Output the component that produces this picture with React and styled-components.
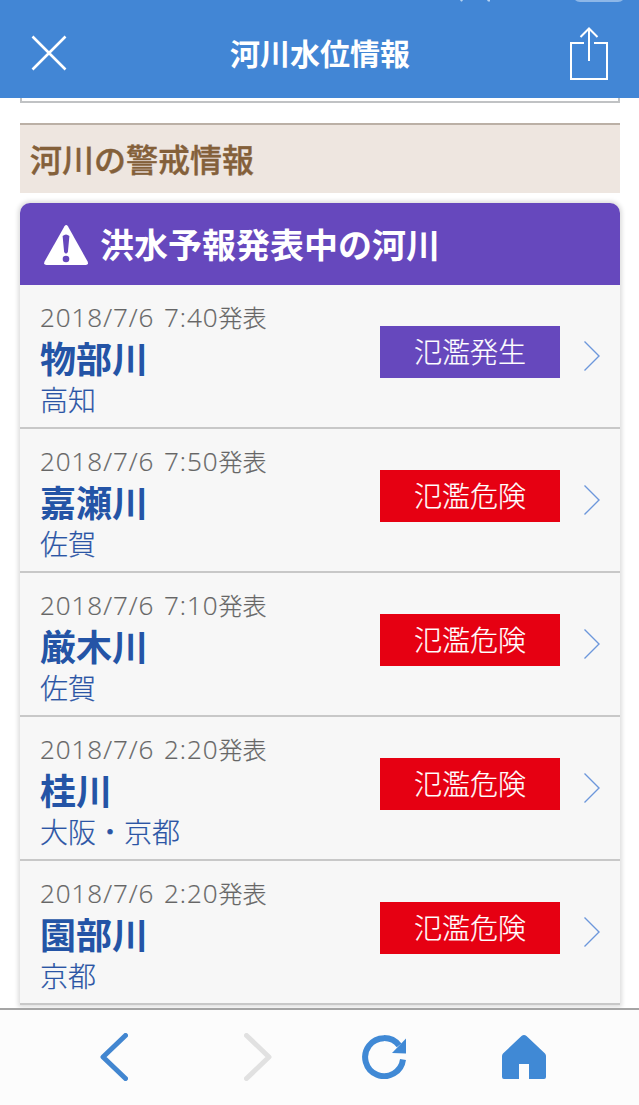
import React from 'react';
import styled, { createGlobalStyle } from 'styled-components';

const GlobalStyle = createGlobalStyle`
  * {
    box-sizing: border-box;
  }
  body {
    margin: 0;
    background: #fff;
    font-family: 'Noto Sans CJK JP', sans-serif;
  }
  h1,
  h2,
  h3,
  h4,
  p {
    margin: 0;
    padding: 0;
  }
  button {
    display: flex;
    padding: 0;
    border: 0;
    background: none;
  }
`;

const AppStyled = styled.div`
  width: 100%;
  height: 1105px;
  display: flex;
  flex-direction: column;
  overflow: hidden;
`;

const TopBar = styled.header`
  position: relative;
  flex: none;
  height: 98px;
  padding: 25px 30px 17px;
  display: flex;
  align-items: center;
  justify-content: space-between;
  background: #4286d5;
  color: #fff;

  h1 {
    padding: 0 0 3px 3px;
    font-size: 30px;
    line-height: 44px;
    font-weight: 700;
  }
  .status {
    position: absolute;
    top: 0;
    right: 0;
  }
`;

const Content = styled.main`
  flex: 1;
  min-height: 0;
  padding: 0 19px 0 20px;
  overflow: hidden;
`;

const PreviousBox = styled.div`
  height: 5px;
  border: 2px solid #c0c2c4;
  border-top: 0;
`;

const SectionTitle = styled.h2`
  height: 70px;
  margin: 20px 0 10px;
  padding-left: 10px;
  border-top: 2px solid #bbb0a6;
  background: #eee6e0;
  color: #84603a;
  font-size: 32px;
  line-height: 66px;
  font-weight: 500;
  -webkit-text-stroke: 0.4px #84603a;
`;

const Card = styled.section`
  border-radius: 10px 10px 0 0;
  background: #f7f7f7;
  box-shadow: 0 0 4px 2px #dedede;
`;

const CardHeader = styled.div`
  height: 82px;
  padding-left: 24px;
  display: flex;
  align-items: center;
  gap: 11px;
  border-radius: 10px 10px 0 0;
  background: #6648bd;
  color: #fff;

  svg {
    margin-top: 2px;
  }
  h3 {
    font-size: 34px;
    line-height: 80px;
    font-weight: 700;
  }
`;

const RiverRow = styled.div`
  height: 144px;
  padding: 0 20px;
  display: flex;
  align-items: center;
  border-bottom: 2px solid #c8c8c8;

  .info {
    flex: 1;
    padding-top: 6px;
  }
  .date {
    color: #666;
    font-size: 24px;
    line-height: 40px;
    font-weight: 300;
    -webkit-text-stroke: 0.2px #666;
  }
  .time {
    font-family: 'Open Sans', 'Noto Sans CJK JP', sans-serif;
    font-size: 26px;
    letter-spacing: 0.95px;
    word-spacing: 2px;
  }
  .name {
    color: #2454a6;
    font-size: 36px;
    line-height: 40px;
    font-weight: 700;
  }
  .area {
    color: #2b55a5;
    font-size: 28px;
    line-height: 44px;
    font-weight: 300;
    -webkit-text-stroke: 0.2px #2b55a5;
  }
`;

const Level = styled.div`
  width: 180px;
  height: 52px;
  margin: 0 24px 8px 0;
  background: ${(props) => (props.$occurred ? '#6648bd' : '#e60012')};
  color: #fff;
  font-size: 28px;
  line-height: 50px;
  font-weight: 300;
  text-align: center;
  -webkit-text-stroke: 0.2px #fff;
`;

const BottomNav = styled.nav`
  flex: none;
  height: 97px;
  padding: 0 27px 2px 44px;
  display: grid;
  grid-template-columns: 140px 148px 104px 176px;
  align-items: center;
  justify-items: center;
  border-top: 2px solid #a5a5a5;
  background: #fcfcfc;
`;

const rivers = [
  { time: '2018/7/6 7:40', name: '物部川', area: '高知', level: '氾濫発生', occurred: true },
  { time: '2018/7/6 7:50', name: '嘉瀬川', area: '佐賀', level: '氾濫危険' },
  { time: '2018/7/6 7:10', name: '厳木川', area: '佐賀', level: '氾濫危険' },
  { time: '2018/7/6 2:20', name: '桂川', area: '大阪・京都', level: '氾濫危険' },
  { time: '2018/7/6 2:20', name: '園部川', area: '京都', level: '氾濫危険' },
];

function Header() {
  return (
    <TopBar>
      <svg className="status" width="180" height="4">
        <path d="M1 0h3l-1 1.5h-1zM28 0h3v1.5h-2z" fill="#b5d2f1" />
        <path d="M116 0h48q-2 2-5 2h-38q-3 0-5-2z" fill="#8db7e8" />
      </svg>
      <button aria-label="閉じる">
        <svg width="38" height="38" fill="none" stroke="#fff" strokeWidth="2.6">
          <path d="M2.5 2.5 35.5 35.5M35.5 2.5 2.5 35.5" />
        </svg>
      </button>
      <h1>河川水位情報</h1>
      <button aria-label="共有">
        <svg width="40" height="54" fill="none" stroke="#fff" strokeWidth="2">
          <path d="M15 17H2v36h36V17H25" />
          <path d="M20 35V3M11.5 11 20 2.5 28.5 11" />
        </svg>
      </button>
    </TopBar>
  );
}

function River({ river }) {
  return (
    <RiverRow>
      <div className="info">
        <p className="date">
          <span className="time">{river.time}</span>発表
        </p>
        <h4 className="name">{river.name}</h4>
        <p className="area">{river.area}</p>
      </div>
      <Level $occurred={river.occurred}>{river.level}</Level>
      <svg width="16" height="32" fill="none" stroke="#6d97db" strokeWidth="1.4">
        <path d="M.5 1.5 15 16 .5 30.5" />
      </svg>
    </RiverRow>
  );
}

function Navigation() {
  return (
    <BottomNav>
      <button aria-label="戻る">
        <svg width="28" height="48" fill="none" stroke="#4286d0" strokeWidth="5" strokeLinecap="round" strokeLinejoin="round">
          <path d="M25.5 2.5 3 24 25.5 45.5" />
        </svg>
      </button>
      <button aria-label="進む">
        <svg width="28" height="48" fill="none" stroke="#e1e1e1" strokeWidth="5" strokeLinecap="round" strokeLinejoin="round">
          <path d="M2.5 2.5 25 24 2.5 45.5" />
        </svg>
      </button>
      <button aria-label="更新">
        <svg width="44" height="44" fill="none">
          <path d="M41 24.5A19 19 0 1 1 37.1 10.4" stroke="#4089d5" strokeWidth="6" />
          <path d="M44 3.5v15L30 18z" fill="#4089d5" />
        </svg>
      </button>
      <button aria-label="ホーム">
        <svg width="44" height="44" fill="#4089d5">
          <path d="M19.5 1q2.5-2 5 0L43 18.5q1 1 1 2.5v21q0 2-2 2H27V29H17v15H2q-2 0-2-2V21q0-1.5 1-2.5z" />
        </svg>
      </button>
    </BottomNav>
  );
}

function App() {
  return (
    <>
      <GlobalStyle />
      <AppStyled>
        <Header />
        <Content>
          <PreviousBox />
          <SectionTitle>河川の警戒情報</SectionTitle>
          <Card>
            <CardHeader>
              <svg width="45" height="40">
                <path d="M20.5 1.2q1.7-2.4 3.4 0L43.6 36.5q1.2 3.500-1.800 3.500H2.500Q-.8 40 .6 36.500z" fill="#fff" />
                <path d="M18.600 11q3.400-3 6.800 0l-1.500 16q-1.900 3-3.800 0z" fill="#6648bd" />
                <circle cx="22" cy="34" r="3.3" fill="#6648bd" />
              </svg>
              <h3>洪水予報発表中の河川</h3>
            </CardHeader>
            {rivers.map((river) => (
              <River key={river.name} river={river} />
            ))}
          </Card>
        </Content>
        <Navigation />
      </AppStyled>
    </>
  );
}

export default App;
